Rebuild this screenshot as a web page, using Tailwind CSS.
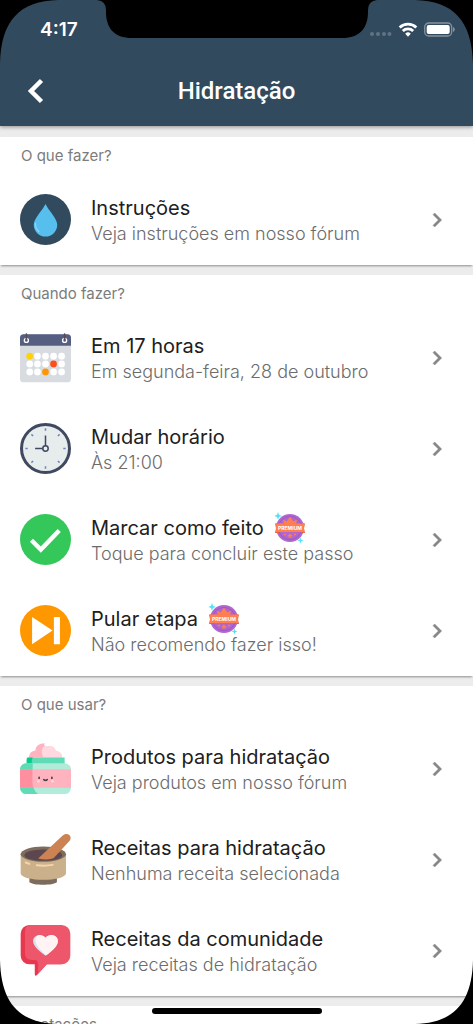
<!DOCTYPE html>
<html lang="pt-BR">
<head>
  <meta charset="UTF-8" />
  <meta name="viewport" content="width=device-width, initial-scale=1.0" />
  <title>Hidratação</title>
  <script src="https://cdn.jsdelivr.net/npm/@tailwindcss/browser@4"></script>
</head>
<body class="bg-black font-['Inter','Liberation_Sans',sans-serif]">

  <!-- shared symbols -->
  <svg class="hidden">
    <symbol id="chevron" viewBox="0 0 24 24">
      <path fill="#868686" stroke="#868686" stroke-width="0.400" d="M10 6 8.59 7.41 13.17 12l-4.58 4.59L10 18l6-6z"/>
    </symbol>
    <symbol id="premium" viewBox="0 0 32 32">
      <circle cx="16" cy="16" r="14" fill="#b066cf"/>
      <circle cx="16" cy="16" r="11.600" fill="none" stroke="#9a50c0" stroke-width="0.800"/>
      <path fill="#ff7f50" d="M10 12 9 7.500l3.600 2L16 4.500l3.400 5 3.600-2L22 12z"/>
      <path fill="#e8623c" d="M1 11.500h4v9.500H1l1-4.700zM31 11.500h-4v9.500h4l-1-4.700z"/>
      <rect x="2" y="11.500" width="28" height="8.500" fill="#ff7f50"/>
      <text x="16" y="18" text-anchor="middle" font-size="5" font-weight="700" fill="#fff">PREMIUM</text>
      <path fill="#ff7f50" d="m16 21 .8 1.700 1.900.2-1.400 1.300.4 1.900-1.700-1-1.700 1 .4-1.900-1.400-1.300 1.900-.2z"/>
      <circle cx="11" cy="22.500" r="1" fill="#ff7f50"/>
      <circle cx="21" cy="22.500" r="1" fill="#ff7f50"/>
      <path fill="#4fe3f5" d="m4 0 1 2.700L7.700 4 5 5 4 7.700 3 5 .3 4 3 2.700zM26.500 25.500l.8 2.200 2.200.8-2.200.8-.8 2.200-.8-2.200-2.200-.8 2.200-.8z"/>
    </symbol>
  </svg>

  <div class="relative h-screen overflow-hidden bg-[#ececec]">

    <header class="relative bg-[#324a5e] text-white shadow-[0_1px_4px_rgba(0,0,0,0.4)]">
      <div class="flex h-14 items-center justify-between pt-1 pr-[18px] pl-10">
        <span class="text-[19px] font-semibold">4:17</span>
        <div class="flex items-center gap-[6px]">
          <svg class="h-4 w-[23px]" viewBox="0 0 23 16" fill="#5f7384">
            <circle cx="3" cy="12" r="2"/><circle cx="9" cy="12" r="2"/><circle cx="15" cy="12" r="2"/><circle cx="20.500" cy="12" r="2"/>
          </svg>
          <svg class="h-4 w-5" viewBox="0 0 20 16" fill="none" stroke="#fff" stroke-width="2.800">
            <path d="M1.700 5.500a12 12 0 0 1 16.600 0"/>
            <path d="M4.800 9a7.500 7.500 0 0 1 10.400 0"/>
            <path d="M10 14.800 7.200 11.700a4 4 0 0 1 5.600 0z" fill="#fff" stroke="none"/>
          </svg>
          <svg class="h-4 w-[31px]" viewBox="0 0 31 16">
            <rect x="0.700" y="1" width="27" height="13" rx="4" fill="none" stroke="#8593a0" stroke-width="1.300"/>
            <rect x="2.700" y="3" width="23" height="9" rx="2" fill="#fff"/>
            <path d="M29 5v5q1.800-.7 1.800-2.500T29 5z" fill="#8593a0"/>
          </svg>
        </div>
      </div>
      <div class="grid h-[70px] grid-cols-[1fr_auto_1fr] items-center">
        <button class="ml-6 h-8 w-6" aria-label="Voltar">
          <svg class="h-8 w-6" viewBox="0 0 24 32" fill="none" stroke="#fff" stroke-width="4.500">
            <path d="M17.500 5.500 7 16l10.500 10.500"/>
          </svg>
        </button>
        <h1 class="font-['Roboto','Inter',sans-serif] text-2xl font-medium">Hidratação</h1>
      </div>
    </header>

    <main class="flex flex-col gap-[10px] pt-[11px]">

      <section class="bg-white shadow-[0_2px_2px_-1px_rgba(0,0,0,0.4)]">
        <h2 class="flex h-[37px] items-center px-[21px] pt-0.5 text-[15px] text-[#7c7c7c]">O que fazer?</h2>
        <a href="#" class="flex h-[91px] items-center gap-5 pr-[22px] pl-5">
          <svg class="size-[51px] shrink-0" viewBox="0 0 152 152">
            <circle cx="76" cy="76" r="76" fill="#324a5e"/>
            <path fill="#56bfee" d="M76 30c8 18 35 43 35 62a35 35 0 0 1-70 0c0-19 27-44 35-62z"/>
            <path fill="none" stroke="#8ad5f5" stroke-width="4" stroke-linecap="round" d="M46 88q-1 14 10 24"/>
          </svg>
          <div class="flex-1 pt-0.5">
            <p class="text-xl leading-[26px] text-[#202020]">Instruções</p>
            <p class="text-lg leading-[26px] font-light text-[#6c6c6c]">Veja instruções em nosso fórum</p>
          </div>
          <svg class="size-7 shrink-0"><use href="#chevron"/></svg>
        </a>
      </section>

      <section class="bg-white shadow-[0_2px_2px_-1px_rgba(0,0,0,0.4)]">
        <h2 class="flex h-[37px] items-center px-[21px] pt-0.5 text-[15px] text-[#7c7c7c]">Quando fazer?</h2>
        <a href="#" class="flex h-[91px] items-center gap-5 pr-[22px] pl-5">
          <svg class="size-[51px] shrink-0" viewBox="0 0 152 152">
            <rect y="7" width="152" height="143" rx="11" fill="#d8dce1"/>
            <path fill="#565f82" d="M0 41V18A11 11 0 0 1 11 7h130a11 11 0 0 1 11 11v23z"/>
            <g fill="none" stroke="#fff" stroke-width="4"><circle cx="19" cy="25" r="6"/><circle cx="133" cy="25" r="6"/></g>
            <path stroke="#5b4b56" stroke-width="5" stroke-linecap="round" d="M19 6v17M133 6v17"/>
            <g fill="#fff">
              <circle cx="52" cy="72" r="10"/><circle cx="76" cy="72" r="10"/><circle cx="100" cy="72" r="10"/><circle cx="124" cy="72" r="10"/>
              <circle cx="29" cy="95" r="10"/><circle cx="52" cy="95" r="10"/><circle cx="76" cy="95" r="10"/><circle cx="124" cy="95" r="10"/>
              <circle cx="29" cy="119" r="10"/><circle cx="52" cy="119" r="10"/><circle cx="100" cy="119" r="10"/><circle cx="124" cy="119" r="10"/>
            </g>
            <circle cx="29" cy="72" r="10" fill="#ffd200"/>
            <circle cx="100" cy="95" r="10" fill="#ff4f19"/>
            <circle cx="76" cy="119" r="10" fill="#ff9500"/>
          </svg>
          <div class="flex-1 pt-0.5">
            <p class="text-xl leading-[26px] text-[#202020]">Em 17 horas</p>
            <p class="text-lg leading-[26px] font-light text-[#6c6c6c]">Em segunda-feira, 28 de outubro</p>
          </div>
          <svg class="size-7 shrink-0"><use href="#chevron"/></svg>
        </a>
        <a href="#" class="flex h-[91px] items-center gap-5 pr-[22px] pl-5">
          <svg class="size-[51px] shrink-0" viewBox="0 0 152 152">
            <circle cx="76" cy="76" r="71.500" fill="#e7eded" stroke="#404960" stroke-width="9"/>
            <path stroke="#7382bd" stroke-width="4.500" d="M76 16v7M76 129v7M16 76h7M129 76h7M34 34l5 5M113 113l5 5M118 34l-5 5M39 113l-5 5"/>
            <g fill="none" stroke="#404960" stroke-width="4.500"><path d="M76 37v32M45 76h24"/><circle cx="76" cy="76" r="8"/></g>
          </svg>
          <div class="flex-1 pt-0.5">
            <p class="text-xl leading-[26px] text-[#202020]">Mudar horário</p>
            <p class="text-lg leading-[26px] font-light text-[#6c6c6c]">Às 21:00</p>
          </div>
          <svg class="size-7 shrink-0"><use href="#chevron"/></svg>
        </a>
        <a href="#" class="flex h-[91px] items-center gap-5 pr-[22px] pl-5">
          <svg class="size-[51px] shrink-0" viewBox="0 0 152 152">
            <circle cx="76" cy="76" r="76" fill="#34c85a"/>
            <path fill="none" stroke="#fff" stroke-width="13" d="m34 78 28 28 55-57"/>
          </svg>
          <div class="flex-1 pt-0.5">
            <p class="flex h-[26px] items-center gap-[10px] text-xl leading-[26px] text-[#202020]">Marcar como feito
              <svg class="size-8"><use href="#premium"/></svg>
            </p>
            <p class="text-lg leading-[26px] font-light text-[#6c6c6c]">Toque para concluir este passo</p>
          </div>
          <svg class="size-7 shrink-0"><use href="#chevron"/></svg>
        </a>
        <a href="#" class="flex h-[91px] items-center gap-5 pr-[22px] pl-5">
          <svg class="size-[51px] shrink-0" viewBox="0 0 152 152">
            <circle cx="76" cy="76" r="76" fill="#ff9800"/>
            <path fill="#fff" d="m36 36 61 40-61 41zM101 36h18v81h-18z"/>
          </svg>
          <div class="flex-1 pt-0.5">
            <p class="flex h-[26px] items-center gap-[10px] text-xl leading-[26px] text-[#202020]">Pular etapa
              <svg class="size-8"><use href="#premium"/></svg>
            </p>
            <p class="text-lg leading-[26px] font-light text-[#6c6c6c]">Não recomendo fazer isso!</p>
          </div>
          <svg class="size-7 shrink-0"><use href="#chevron"/></svg>
        </a>
      </section>

      <section class="bg-white shadow-[0_2px_2px_-1px_rgba(0,0,0,0.4)]">
        <h2 class="flex h-[37px] items-center px-[21px] pt-0.5 text-[15px] text-[#7c7c7c]">O que usar?</h2>
        <a href="#" class="flex h-[91px] items-center gap-5 pr-[22px] pl-5">
          <svg class="size-[51px] shrink-0" viewBox="0 0 152 152">
            <path fill="#ffb3bf" d="M27 43c0-12 8-20 19-20C46 10 56 1 74 1c-6 6 2 10 15 10 10 0 17 6 17 13 11 1 19 8 19 19z"/>
            <path fill="#ffd9df" d="M70 43C62 30 64 12 74 9h15c10 0 17 6 17 15 11 1 19 9 19 19z"/>
            <path fill="#5fdbb5" d="M20 43h113v20H20z"/>
            <path fill="#00cc8b" d="M20 63V50q0-7 7-7h11q-4 8-3 20z"/>
            <rect y="60" width="152" height="92" rx="19" fill="#b0ecd9"/>
            <path fill="#5fdbb5" d="M38 60H19A19 19 0 0 0 0 79v54a19 19 0 0 0 19 19h35c-11-9-17-21-17-36z"/>
            <path fill="#ffb3bf" d="M0 78h152v55H0z"/>
            <path fill="#ff8f9f" d="M0 78h37v38q0 9 3 17H0z"/>
            <circle cx="55" cy="114" r="4" fill="#ffd9df"/><circle cx="97" cy="114" r="4" fill="#ffd9df"/>
            <path fill="none" stroke="#46414c" stroke-width="5" stroke-linecap="round" d="M57 102v3M95 102v3M71 109q5 5 10 0"/>
          </svg>
          <div class="flex-1 pt-0.5">
            <p class="text-xl leading-[26px] text-[#202020]">Produtos para hidratação</p>
            <p class="text-lg leading-[26px] font-light text-[#6c6c6c]">Veja produtos em nosso fórum</p>
          </div>
          <svg class="size-7 shrink-0"><use href="#chevron"/></svg>
        </a>
        <a href="#" class="flex h-[91px] items-center gap-5 pr-[22px] pl-5">
          <svg class="size-[51px] shrink-0" viewBox="0 0 152 152">
            <path fill="#7d6c5c" d="M28 126h82v18c-12 10-70 10-82 0z"/>
            <path fill="#cbb08c" d="M2 59h135v58c0 26-135 26-135 0z"/>
            <ellipse cx="69.500" cy="60" rx="67.500" ry="23" fill="#7d6c5c"/>
            <ellipse cx="69.500" cy="63" rx="56" ry="17" fill="#5c4650"/>
            <path fill="#cc8353" d="M54 73 128 4c15-11 29 3 20 16l-48 52q-22 8-46 1z"/>
            <path fill="none" stroke="#f6d5aa" stroke-width="6" stroke-linecap="round" d="m17 85 11 4M50 93q25 3 47-1"/>
          </svg>
          <div class="flex-1 pt-0.5">
            <p class="text-xl leading-[26px] text-[#202020]">Receitas para hidratação</p>
            <p class="text-lg leading-[26px] font-light text-[#6c6c6c]">Nenhuma receita selecionada</p>
          </div>
          <svg class="size-7 shrink-0"><use href="#chevron"/></svg>
        </a>
        <a href="#" class="flex h-[91px] items-center gap-5 pr-[22px] pl-5">
          <svg class="size-[51px] shrink-0" viewBox="0 0 152 152">
            <path fill="#e8384f" d="M28 0h96v117H80l-30 33q-6 4-6-3v-30H28A26 26 0 0 1 2 91V26A26 26 0 0 1 28 0z"/>
            <path fill="#ee566b" d="M28 0h96a26 26 0 0 1 26 26v65a26 26 0 0 1-26 26H80l-26 28v-28q0-13-11-13h-8q-20 0-20-20V20Q15 4 28 0z"/>
            <path fill="#d5e5ee" d="M76 92C62 81 39 66 39 48c0-17 23-26 37-10 14-16 37-7 37 10 0 18-23 33-37 44z"/>
            <path fill="#fff3f4" d="M79 90C66 80 47 62 46 46c0-8 4-14 11-16 7 0 14 3 19 8 14-16 37-7 37 10 0 17-20 31-34 42z"/>
          </svg>
          <div class="flex-1 pt-0.5">
            <p class="text-xl leading-[26px] text-[#202020]">Receitas da comunidade</p>
            <p class="text-lg leading-[26px] font-light text-[#6c6c6c]">Veja receitas de hidratação</p>
          </div>
          <svg class="size-7 shrink-0"><use href="#chevron"/></svg>
        </a>
      </section>

      <section class="bg-white shadow-[0_2px_2px_-1px_rgba(0,0,0,0.4)]">
        <h2 class="flex h-[37px] items-center px-[21px] pt-0.5 text-[15px] text-[#7c7c7c]">Anotações</h2>
      </section>
    </main>

    <!-- device frame: notch, screen corners, home indicator -->
    <svg class="absolute top-0 left-1/2 h-[38px] w-[280px] -translate-x-1/2" viewBox="0 0 280 38">
      <path d="M0 0q9 1 9 10v2c0 16 8 26 26 26h210c18 0 26-10 26-26v-2q0-9 9-10z"/>
    </svg>
    <svg class="absolute top-0 left-0 size-16" viewBox="0 0 64 64"><path d="M0 0h58C20 1 1 20 0 64z"/></svg>
    <svg class="absolute top-0 right-0 size-16 -scale-x-100" viewBox="0 0 64 64"><path d="M0 0h58C20 1 1 20 0 64z"/></svg>
    <svg class="absolute bottom-0 left-0 size-16 -scale-y-100" viewBox="0 0 64 64"><path d="M0 0h58C20 1 1 20 0 64z"/></svg>
    <svg class="absolute right-0 bottom-0 size-16 -scale-100" viewBox="0 0 64 64"><path d="M0 0h58C20 1 1 20 0 64z"/></svg>
    <div class="absolute bottom-[10px] left-1/2 h-[6px] w-[170px] -translate-x-1/2 rounded-full bg-black"></div>
  </div>
</body>
</html>
